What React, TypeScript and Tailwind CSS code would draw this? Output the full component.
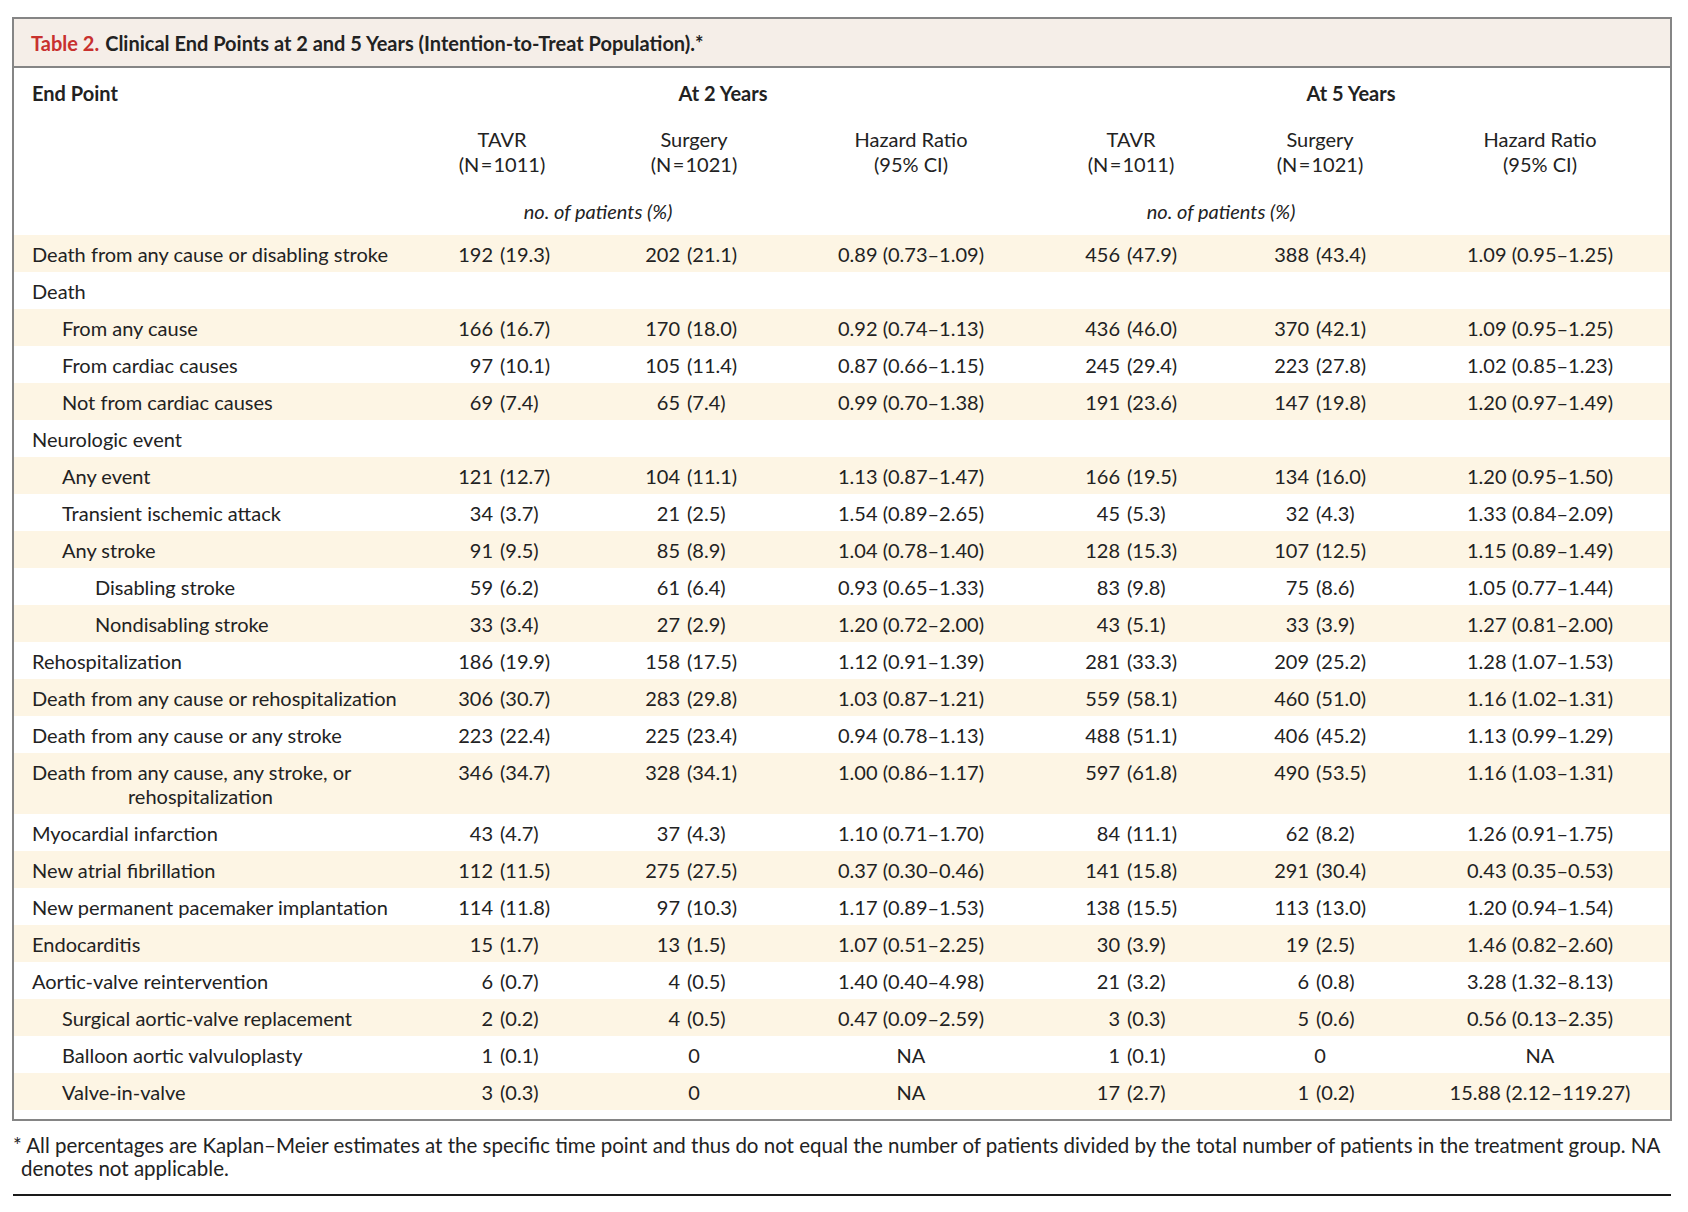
type Cell = string;

interface Row {
  label: string;
  indent?: 0 | 1 | 2;
  values?: Cell[];
  wrap?: string;
}

const rows: Row[] = [
  { label: 'Death from any cause or disabling stroke', values: ['192 (19.3)', '202 (21.1)', '0.89 (0.73–1.09)', '456 (47.9)', '388 (43.4)', '1.09 (0.95–1.25)'] },
  { label: 'Death' },
  { label: 'From any cause', indent: 1, values: ['166 (16.7)', '170 (18.0)', '0.92 (0.74–1.13)', '436 (46.0)', '370 (42.1)', '1.09 (0.95–1.25)'] },
  { label: 'From cardiac causes', indent: 1, values: ['97 (10.1)', '105 (11.4)', '0.87 (0.66–1.15)', '245 (29.4)', '223 (27.8)', '1.02 (0.85–1.23)'] },
  { label: 'Not from cardiac causes', indent: 1, values: ['69 (7.4)', '65 (7.4)', '0.99 (0.70–1.38)', '191 (23.6)', '147 (19.8)', '1.20 (0.97–1.49)'] },
  { label: 'Neurologic event' },
  { label: 'Any event', indent: 1, values: ['121 (12.7)', '104 (11.1)', '1.13 (0.87–1.47)', '166 (19.5)', '134 (16.0)', '1.20 (0.95–1.50)'] },
  { label: 'Transient ischemic attack', indent: 1, values: ['34 (3.7)', '21 (2.5)', '1.54 (0.89–2.65)', '45 (5.3)', '32 (4.3)', '1.33 (0.84–2.09)'] },
  { label: 'Any stroke', indent: 1, values: ['91 (9.5)', '85 (8.9)', '1.04 (0.78–1.40)', '128 (15.3)', '107 (12.5)', '1.15 (0.89–1.49)'] },
  { label: 'Disabling stroke', indent: 2, values: ['59 (6.2)', '61 (6.4)', '0.93 (0.65–1.33)', '83 (9.8)', '75 (8.6)', '1.05 (0.77–1.44)'] },
  { label: 'Nondisabling stroke', indent: 2, values: ['33 (3.4)', '27 (2.9)', '1.20 (0.72–2.00)', '43 (5.1)', '33 (3.9)', '1.27 (0.81–2.00)'] },
  { label: 'Rehospitalization', values: ['186 (19.9)', '158 (17.5)', '1.12 (0.91–1.39)', '281 (33.3)', '209 (25.2)', '1.28 (1.07–1.53)'] },
  { label: 'Death from any cause or rehospitalization', values: ['306 (30.7)', '283 (29.8)', '1.03 (0.87–1.21)', '559 (58.1)', '460 (51.0)', '1.16 (1.02–1.31)'] },
  { label: 'Death from any cause or any stroke', values: ['223 (22.4)', '225 (23.4)', '0.94 (0.78–1.13)', '488 (51.1)', '406 (45.2)', '1.13 (0.99–1.29)'] },
  { label: 'Death from any cause, any stroke, or', wrap: 'rehospitalization', values: ['346 (34.7)', '328 (34.1)', '1.00 (0.86–1.17)', '597 (61.8)', '490 (53.5)', '1.16 (1.03–1.31)'] },
  { label: 'Myocardial infarction', values: ['43 (4.7)', '37 (4.3)', '1.10 (0.71–1.70)', '84 (11.1)', '62 (8.2)', '1.26 (0.91–1.75)'] },
  { label: 'New atrial fibrillation', values: ['112 (11.5)', '275 (27.5)', '0.37 (0.30–0.46)', '141 (15.8)', '291 (30.4)', '0.43 (0.35–0.53)'] },
  { label: 'New permanent pacemaker implantation', values: ['114 (11.8)', '97 (10.3)', '1.17 (0.89–1.53)', '138 (15.5)', '113 (13.0)', '1.20 (0.94–1.54)'] },
  { label: 'Endocarditis', values: ['15 (1.7)', '13 (1.5)', '1.07 (0.51–2.25)', '30 (3.9)', '19 (2.5)', '1.46 (0.82–2.60)'] },
  { label: 'Aortic-valve reintervention', values: ['6 (0.7)', '4 (0.5)', '1.40 (0.40–4.98)', '21 (3.2)', '6 (0.8)', '3.28 (1.32–8.13)'] },
  { label: 'Surgical aortic-valve replacement', indent: 1, values: ['2 (0.2)', '4 (0.5)', '0.47 (0.09–2.59)', '3 (0.3)', '5 (0.6)', '0.56 (0.13–2.35)'] },
  { label: 'Balloon aortic valvuloplasty', indent: 1, values: ['1 (0.1)', '0', 'NA', '1 (0.1)', '0', 'NA'] },
  { label: 'Valve-in-valve', indent: 1, values: ['3 (0.3)', '0', 'NA', '17 (2.7)', '1 (0.2)', '15.88 (2.12–119.27)'] },
];

const grid = 'grid grid-cols-[392px_192px_192px_242px_198px_180px_1fr]';
const indentCls = ['pl-[18px]', 'pl-[48px]', 'pl-[81px]'];
// width of the number part, so the "(" lines up down each count column
const countWidth: Record<number, string> = { 0: 'w-[87px]', 1: 'w-[82px]', 3: 'w-[88px]', 4: 'w-[79px]' };
const n = (v: string) => `(N\u200A=\u200A${v})`;

function Value({ value, col }: { value: string; col: number }) {
  const i = value.indexOf(' (');
  if (col === 2 || col === 5 || i < 0) {
    return <div className="text-center whitespace-nowrap">{value}</div>;
  }
  return (
    <div className="flex whitespace-nowrap">
      <span className={`${countWidth[col]} text-right shrink-0`}>{value.slice(0, i)}</span>
      <span className="pl-[7px]">{value.slice(i + 1)}</span>
    </div>
  );
}

export default function App() {
  return (
    <div className="min-h-[1212px] bg-white pt-[17px] text-[20px] text-[#222] font-['Lato',sans-serif]">
      <div className="ml-[12px] w-[1660px] border-2 border-[#858585]">
        <div className="h-[49px] flex items-center pl-[17px] bg-[#f5eee8] border-b-2 border-[#858585] font-bold">
          <span className="text-[#c8312e]">Table 2.</span>
          <span className="ml-[6px]">Clinical End Points at 2 and 5 Years (Intention-to-Treat Population).*</span>
        </div>

        {/* Header */}
        <div className={`${grid} h-[49px] items-center font-bold`}>
          <div className="pl-[18px]">End Point</div>
          <div className="col-span-3 text-center pl-[8px]">At 2 Years</div>
          <div className="col-span-3 text-center">At 5 Years</div>
        </div>
        <div className={`${grid} pt-[10px] leading-[25px] text-center`}>
          <div />
          <div>TAVR<br />{n('1011')}</div>
          <div>Surgery<br />{n('1021')}</div>
          <div>Hazard Ratio<br />(95% CI)</div>
          <div>TAVR<br />{n('1011')}</div>
          <div>Surgery<br />{n('1021')}</div>
          <div>Hazard Ratio<br />(95% CI)</div>
        </div>
        <div className={`${grid} mt-[22px] mb-[12px] leading-[24px] italic text-center`}>
          <div />
          <div className="col-span-2">no. of patients (%)</div>
          <div />
          <div className="col-span-2">no. of patients (%)</div>
          <div />
        </div>

        {/* Body */}
        <div className="pb-[9px]">
          {rows.map((r, idx) => (
            <div key={r.label} className={`${grid} py-[6.5px] leading-[24px] ${idx % 2 === 0 ? 'bg-[#fdf5e4]' : 'bg-white'}`}>
              <div className={indentCls[r.indent ?? 0]}>
                {r.label}
                {r.wrap && <div className="pl-[96px]">{r.wrap}</div>}
              </div>
              {r.values ? (
                r.values.map((v, c) => <Value key={c} value={v} col={c} />)
              ) : (
                <div className="col-span-6" />
              )}
            </div>
          ))}
        </div>
      </div>

      <div className="ml-[13px] w-[1658px] mt-[13px] text-[20.5px] leading-[23px] pl-[8px] -indent-[8px]">
        * All percentages are Kaplan–Meier estimates at the specific time point and thus do not equal the number of patients divided by the total number of patients in the treatment group. NA denotes not applicable.
      </div>
      <div className="ml-[13px] w-[1658px] mt-[14px] h-[2px] bg-[#1a1a1a]" />
    </div>
  );
}
